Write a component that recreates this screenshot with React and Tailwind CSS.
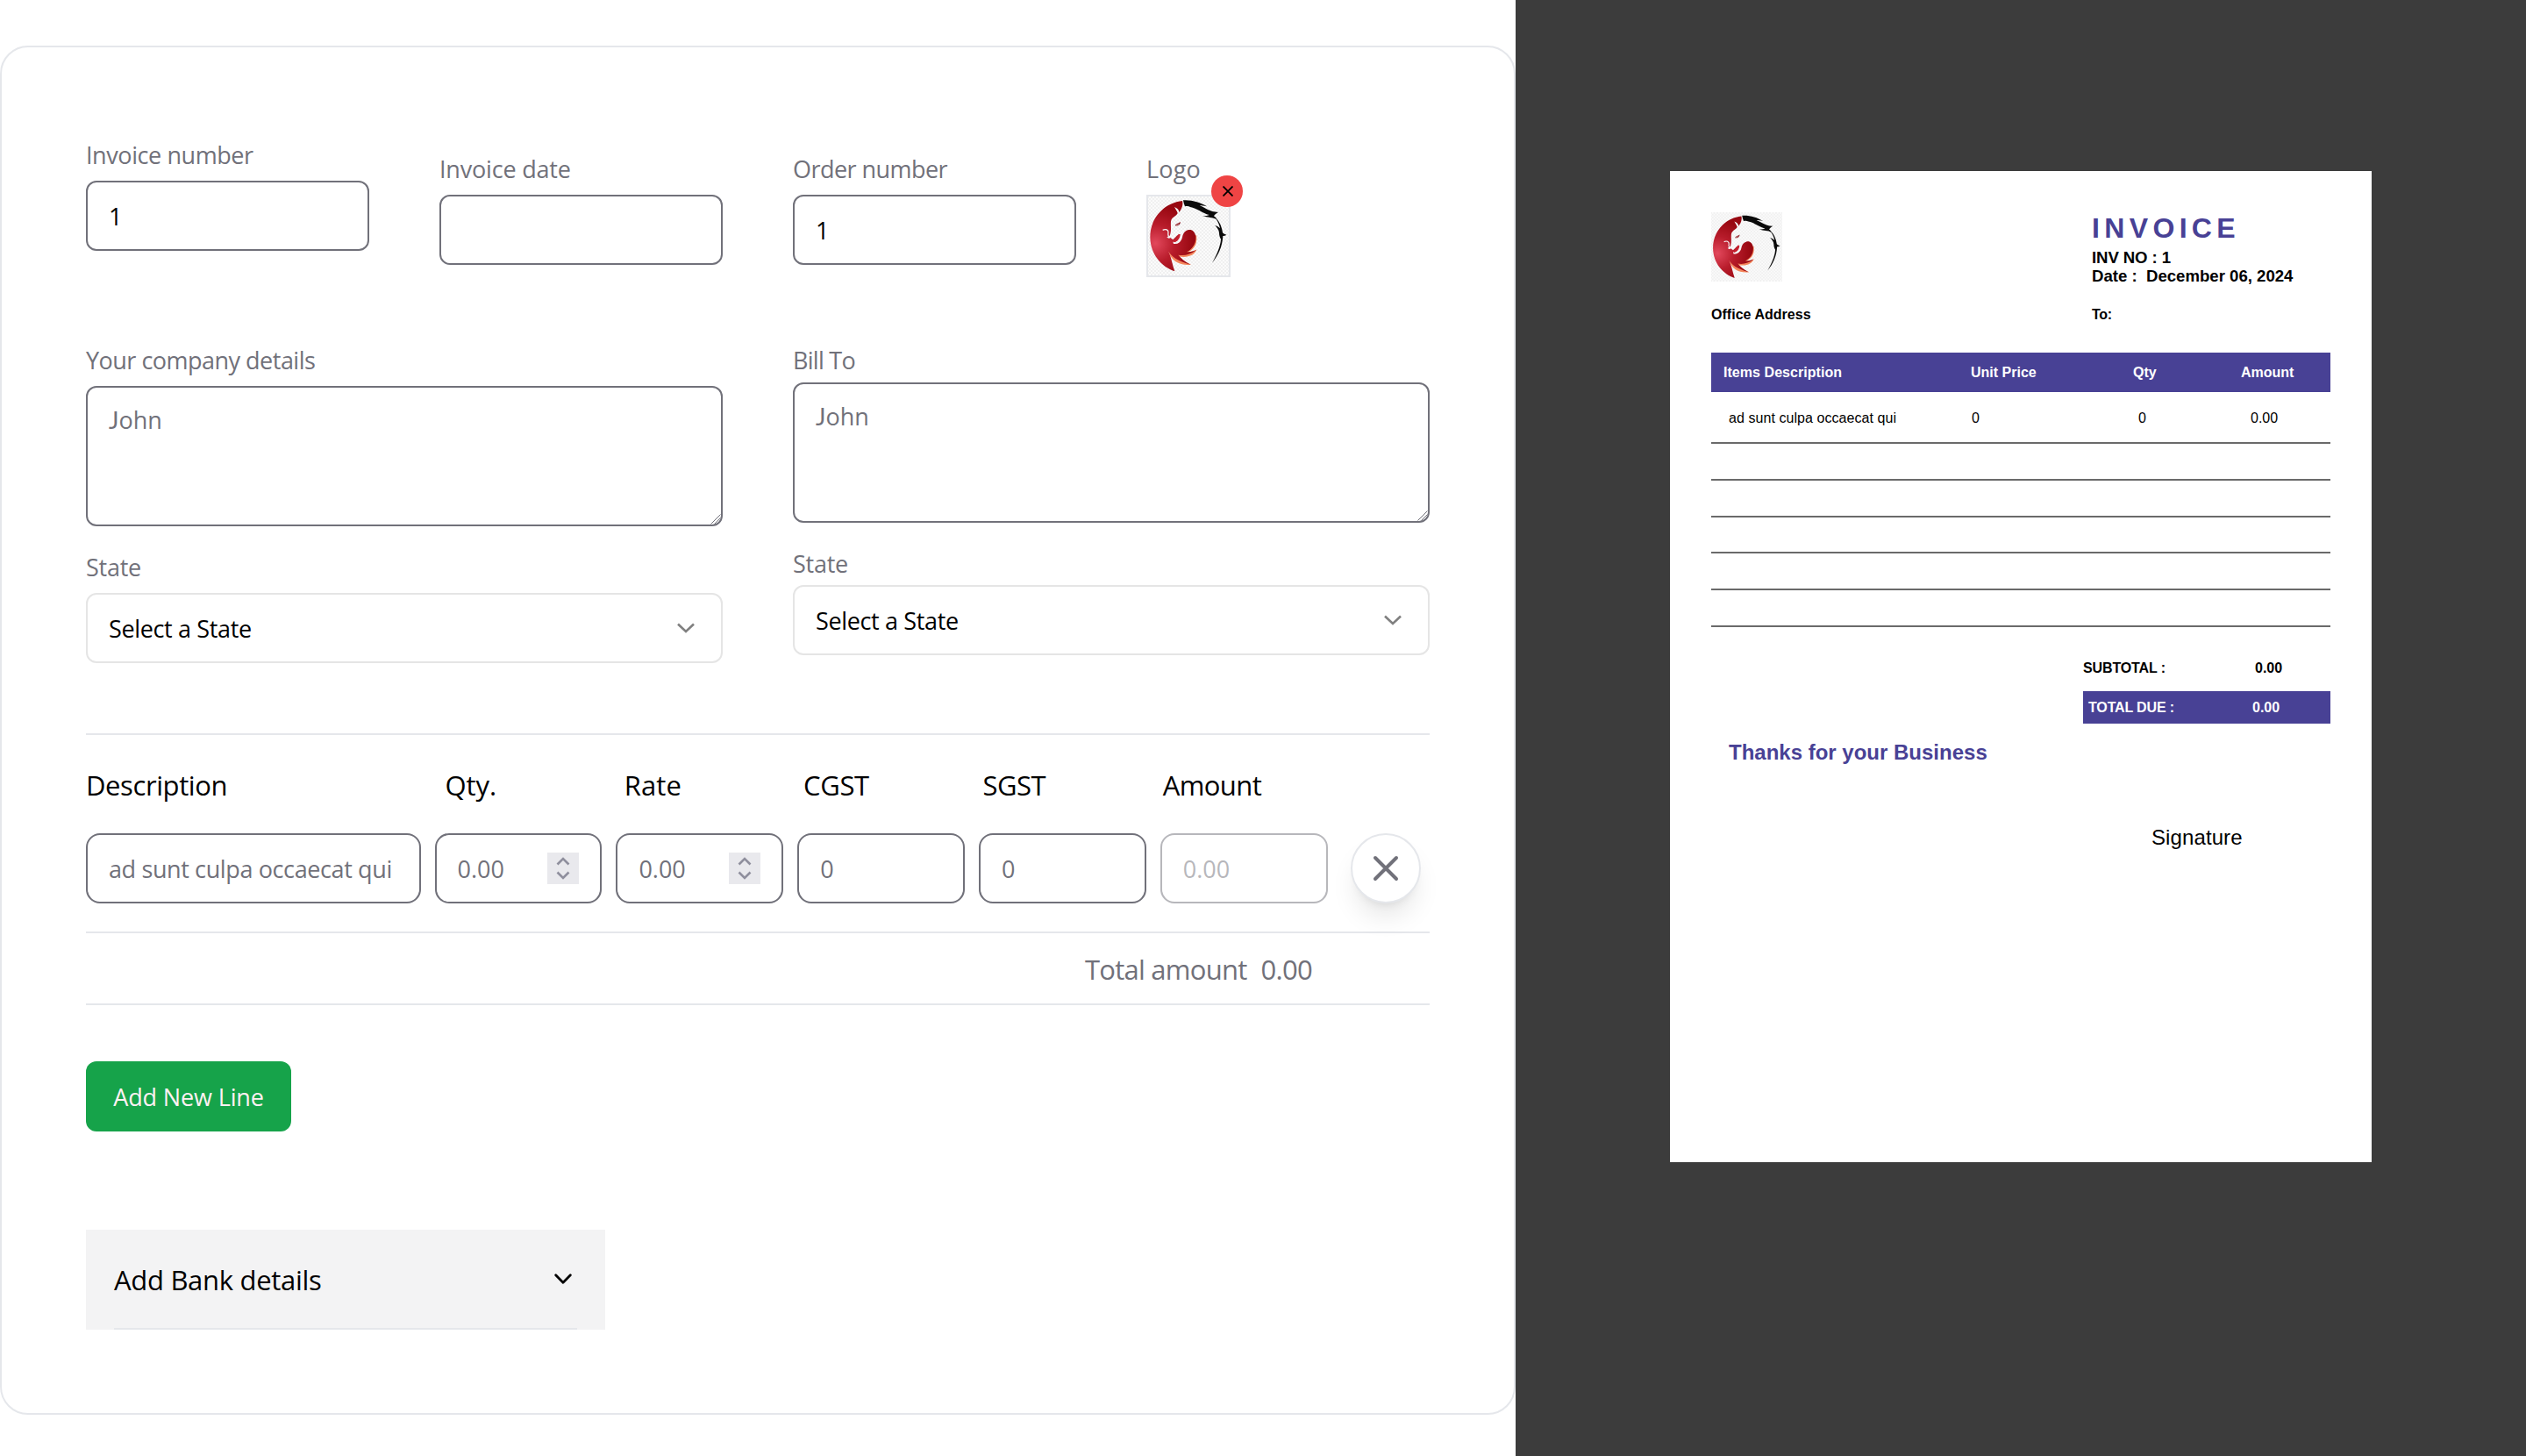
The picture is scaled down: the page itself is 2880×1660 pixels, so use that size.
import { useId } from "react";

function HorseLogo({ className }) {
  const id = useId();
  const red = `${id}-red`;
  const check = `${id}-check`;
  return (
    <svg viewBox="57 102 276 270" preserveAspectRatio="none" className={className}>
      <defs>
        <radialGradient id={red} gradientUnits="userSpaceOnUse" cx="82" cy="262" r="130">
          <stop offset="0" stopColor="#e2485c" />
          <stop offset="0.5" stopColor="#b81c2b" />
          <stop offset="1" stopColor="#980811" />
        </radialGradient>
        <pattern id={check} width="12" height="12" patternUnits="userSpaceOnUse">
          <rect width="12" height="12" fill="#fbfbfb" />
          <rect width="6" height="6" fill="#f0f0f0" />
          <rect x="6" y="6" width="6" height="6" fill="#f0f0f0" />
        </pattern>
      </defs>
      <rect x="57" y="102" width="276" height="270" fill={`url(#${check})`} />
      <path
        d="M222 234C226 258 220 280 194 292C208 290 218 288 223 283C216 304 192 313 161 307C172 318 186 329 204 335C170 339 136 326 126 288Z"
        fill="#f5875c"
      />
      <path
        d="M174 117C110 124 64 178 64 240C64 300 104 343 148 358C140 335 137 312 127 290C137 307 155 321 202 335C182 324 168 312 160 302C180 306 202 301 222 285C208 291 198 292 189 292C212 279 222 260 220 238C217 221 206 213 193 217C180 221 176 232 174 242C170 257 159 266 144 264L142 257C153 259 164 249 166 231C157 232 153 240 142 250L133 243C130 247 124 245 121 241L131 236C139 218 132 196 136 183C140 172 155 168 158 159C156 152 152 147 147 138C158 142 163 149 163 156C172 145 178 130 174 117Z"
        fill={`url(#${red})`}
      />
      <path d="M107 217C117 212 127 216 126 226C124 234 127 240 132 241" fill="none" stroke="#f6f6f6" strokeWidth="4" />
      <path d="M149 202C152 194 161 194 168 189C167 198 160 204 149 202Z" fill="#8f1a22" />
      <path d="M153 200L162 196" stroke="#f6f6f6" strokeWidth="1.5" />
      <path d="M144 254C154 248 160 238 161 230L167 232C166 247 157 257 146 259Z" fill="#c8202e" />
      <path
        d="M177 115C206 113 236 122 258 136C248 134 240 134 233 133C254 141 266 155 297 156C290 160 285 163 282 169C288 173 290 176 291 181C278 172 262 175 243 169C255 169 261 167 266 165C243 160 224 142 201 138C196 135 192 134 183 136C180 129 178 122 177 115Z"
        fill="#0a0a0a"
      />
      <path
        d="M284 172C300 184 309 204 312 226C316 230 320 232 325 233C320 236 316 237 313 237C311 274 297 304 276 329C294 298 305 268 306 248C302 242 300 234 300 226C299 215 292 208 286 201C293 203 298 206 303 211C300 196 294 184 284 172Z"
        fill="#0a0a0a"
      />
    </svg>
  );
}

function Label({ children, className = "" }) {
  return <div className={`h-10 leading-[40px] whitespace-nowrap text-[#71717a] ${className}`}>{children}</div>;
}

function Box({ children, className = "" }) {
  return (
    <div className={`flex h-20 items-center border-2 bg-white pt-0.5 pl-6 whitespace-nowrap ${className}`}>
      {children}
    </div>
  );
}

function NoteArea({ className }) {
  return (
    <div className={`relative h-40 rounded-xl border-2 border-[#71717a] pt-[17px] pl-6 leading-[40px] text-[#71717a] ${className}`}>
      <span className="font-['Lato',sans-serif]">J</span>ohn
      <svg className="absolute right-0 bottom-0 h-3 w-3" viewBox="0 0 12 12" fill="none" stroke="#71717a" strokeWidth="1">
        <path d="M0.5 11.5L11.5 0.5M4.5 11.5L11.5 4.5M8 11.5L11.5 8" />
      </svg>
    </div>
  );
}

function StateSelect({ className }) {
  return (
    <Box className={`justify-between rounded-xl border-[#e5e5e5] text-black ${className}`}>
      <span className="tracking-[-0.353px]">Select a State</span>
      <svg className="mr-[30px] mb-0.5 h-3 w-5" viewBox="0 0 20 12" fill="none" stroke="#808080" strokeWidth="2.6">
        <path d="M1 1.5L10 10L19 1.5" />
      </svg>
    </Box>
  );
}

function Spinner() {
  return (
    <svg className="mr-6 mb-0.5 ml-auto h-9 w-9" viewBox="0 0 36 36" fill="none">
      <rect width="36" height="36" fill="#e9e9ed" />
      <path d="M11.5 13.5L18 7L24.5 13.5M11.5 22.5L18 29L24.5 22.5" stroke="#8f8f9d" strokeWidth="2.6" />
    </svg>
  );
}

function InvoiceForm() {
  return (
    <section className="w-[1728px] bg-white pt-[52px]">
      <div className="h-[1561px] rounded-[32px] border-2 border-[#e5e7eb] px-24 pt-[103px]">
        <div className="grid h-[159px] grid-cols-4 items-start gap-x-20">
          <div>
            <Label className="tracking-[-0.42px]">Invoice number</Label>
            <Box className="mt-[9px] rounded-xl border-[#71717a] text-black">1</Box>
          </div>
          <div className="pt-4">
            <Label className="tracking-[-0.2px]">Invoice date</Label>
            <Box className="mt-[9px] rounded-xl border-[#71717a]" />
          </div>
          <div className="pt-4">
            <Label className="tracking-[-0.55px]">Order number</Label>
            <Box className="mt-[9px] rounded-xl border-[#71717a] text-black">1</Box>
          </div>
          <div className="pt-4">
            <Label className="tracking-[0.2px]">Logo</Label>
            <div className="relative mt-[9px] h-[94px] w-24 border-2 border-[#e5e7eb]">
              <HorseLogo className="h-full w-full" />
              <div className="absolute -top-6 -right-4 flex h-9 w-9 items-center justify-center rounded-full bg-[#ef4444]">
                <svg className="ml-0.5 h-3 w-3" viewBox="0 0 12 12" stroke="#000" strokeWidth="1.8">
                  <path d="M0.5 0.5L11.5 11.5M11.5 0.5L0.5 11.5" />
                </svg>
              </div>
            </div>
          </div>
        </div>

        <div className="mt-[75px] grid grid-cols-2 gap-x-20">
          <div>
            <Label className="tracking-[-0.51px]">Your company details</Label>
            <NoteArea className="mt-[9px]" />
            <Label className="mt-[27px] tracking-[-0.26px]">State</Label>
            <StateSelect className="mt-[9px]" />
          </div>
          <div>
            <Label className="tracking-[-0.71px]">Bill To</Label>
            <NoteArea className="mt-[5px]" />
            <Label className="mt-[27px] tracking-[-0.26px]">State</Label>
            <StateSelect className="mt-1" />
          </div>
        </div>

        <div className="mt-20 border-y-2 border-[#e5e7eb] pt-[33px] pb-8">
          <div className="grid grid-cols-[408.5px_repeat(4,204.3px)_1fr] text-[31px] leading-[48px] text-black">
            <span className="tracking-[-0.4px]">Description</span>
            <span className="pl-px tracking-[-0.06px]">Qty.</span>
            <span className="pl-px tracking-[0.1px]">Rate</span>
            <span className="pl-px tracking-[-0.35px]">CGST</span>
            <span className="pl-px tracking-[-0.51px]">SGST</span>
            <span className="pl-0.5 tracking-[-0.6px]">Amount</span>
          </div>
          <div className="mt-[31px] flex gap-4">
            <Box className="w-[381.6px] rounded-2xl border-[#71717a] text-[#71717a]">
              <span className="tracking-[-0.38px]">ad sunt culpa occaecat qui</span>
            </Box>
            <Box className="w-[190.8px] rounded-2xl border-[#71717a] text-[#71717a]">
              0.00
              <Spinner />
            </Box>
            <Box className="w-[190.8px] rounded-2xl border-[#71717a] text-[#71717a]">
              0.00
              <Spinner />
            </Box>
            <Box className="w-[190.8px] rounded-2xl border-[#71717a] text-[#71717a]">0</Box>
            <Box className="w-[190.8px] rounded-2xl border-[#71717a] text-[#71717a]">0</Box>
            <Box className="w-[190.8px] rounded-2xl border-[#71717a] text-[#71717a] opacity-50">0.00</Box>
            <div className="ml-2.5 flex h-20 w-20 items-center justify-center rounded-full border-2 border-[#e5e7eb] bg-white shadow-[0_20px_30px_-6px_rgba(0,0,0,0.1),0_8px_12px_-8px_rgba(0,0,0,0.1)]">
              <svg className="h-12 w-12" viewBox="0 0 24 24" fill="none" stroke="#71717a" strokeWidth="2" strokeLinecap="round">
                <path d="M6 18L18 6M6 6l12 12" />
              </svg>
            </div>
          </div>
        </div>

        <div className="flex h-[82px] justify-end gap-4 border-b-2 border-[#e5e7eb] pt-[17px] pr-[134px] text-[31px] leading-[48px] text-[#71717a]">
          <span className="tracking-[-0.75px]">Total amount</span>
          <span className="tracking-[-0.7px]">0.00</span>
        </div>

        <button className="mt-16 flex h-20 w-[234px] items-center justify-center rounded-xl bg-[#16a34a] pt-0.5 text-[#fff1f2]">
          <span className="tracking-[-0.14px]">Add New Line</span>
        </button>

        <div className="mt-28 flex h-[114px] w-[592px] bg-[#f3f3f4] px-8">
          <div className="flex w-full items-center justify-between border-b-2 border-[#e5e7eb] pt-0.5 text-[31px] leading-[48px] text-black">
            <span className="tracking-[-0.3px]">Add Bank details</span>
            <svg className="mr-1.5 mb-0.5 h-3 w-5" viewBox="0 0 20 12" fill="none" stroke="#000" strokeWidth="2.8" strokeLinecap="round" strokeLinejoin="round">
              <path d="M1.7 1.8L10 10.2L18.3 1.8" />
            </svg>
          </div>
        </div>
      </div>
    </section>
  );
}

function PdfPage() {
  return (
    <div className="h-[1130px] w-[800px] bg-white px-[47px] pt-[47px] font-['Liberation_Sans',Arial,sans-serif] text-[16px] leading-[20px] font-bold whitespace-pre text-black">
      <div className="grid h-[83px] grid-cols-[434px_1fr]">
        <HorseLogo className="h-[79px] w-[81px]" />
        <div>
          <div className="h-[41px] text-[32px] leading-[36px] tracking-[5.35px] text-[#484195]">INVOICE</div>
          <div className="text-[18.6px] leading-[21px] tracking-[-0.1px]">INV NO : 1</div>
          <div className="text-[18.6px] leading-[21px]">{"Date :  December 06, 2024"}</div>
        </div>
      </div>
      <div className="mt-6 grid grid-cols-[434px_1fr]">
        <span className="tracking-[0.03px]">Office Address</span>
        <span className="tracking-[-0.3px]">To:</span>
      </div>

      <div className="mt-[33px] grid h-[45px] grid-cols-[296px_185px_123px_1fr] items-center bg-[#484195] text-white">
        <span className="pl-3.5 tracking-[0.05px]">Items Description</span>
        <span>Unit Price</span>
        <span>Qty</span>
        <span>Amount</span>
      </div>
      <div className="grid h-[59.3px] grid-cols-[297px_190px_128px_1fr] border-b-2 border-[#6a6a6a] pt-5 font-normal">
        <span className="pl-5 tracking-[0.06px]">ad sunt culpa occaecat qui</span>
        <span>0</span>
        <span>0</span>
        <span>0.00</span>
      </div>
      <div className="h-[41.7px] border-b-2 border-[#6a6a6a]" />
      <div className="h-[41.7px] border-b-2 border-[#6a6a6a]" />
      <div className="h-[41.7px] border-b-2 border-[#6a6a6a]" />
      <div className="h-[41.7px] border-b-2 border-[#6a6a6a]" />
      <div className="h-[41.7px] border-b-2 border-[#6a6a6a]" />

      <div className="mt-[37px] ml-[424px] flex">
        <span className="w-[196px] tracking-[-0.12px]">SUBTOTAL :</span>
        <span>0.00</span>
      </div>
      <div className="mt-4 ml-[424px] flex h-[37px] items-center bg-[#484195] pt-0.5 pl-1.5 text-white">
        <span className="w-[187px] tracking-[-0.15px]">TOTAL DUE :</span>
        <span>0.00</span>
      </div>
      <div className="mt-[19px] pl-5 text-[24px] leading-[28px] text-[#484195]">Thanks for your Business</div>
      <div className="mt-[69px] pl-[502px] text-[24px] leading-[28px] font-normal tracking-[0.1px]">Signature</div>
    </div>
  );
}

export default function App() {
  return (
    <div className="flex h-[1660px] w-[2880px] bg-white font-['Open_Sans','Noto_Sans',sans-serif] text-[27px] leading-[40px]">
      <InvoiceForm />
      <aside className="flex flex-1 justify-center bg-[#3c3c3c] pt-[195px]">
        <PdfPage />
      </aside>
    </div>
  );
}
